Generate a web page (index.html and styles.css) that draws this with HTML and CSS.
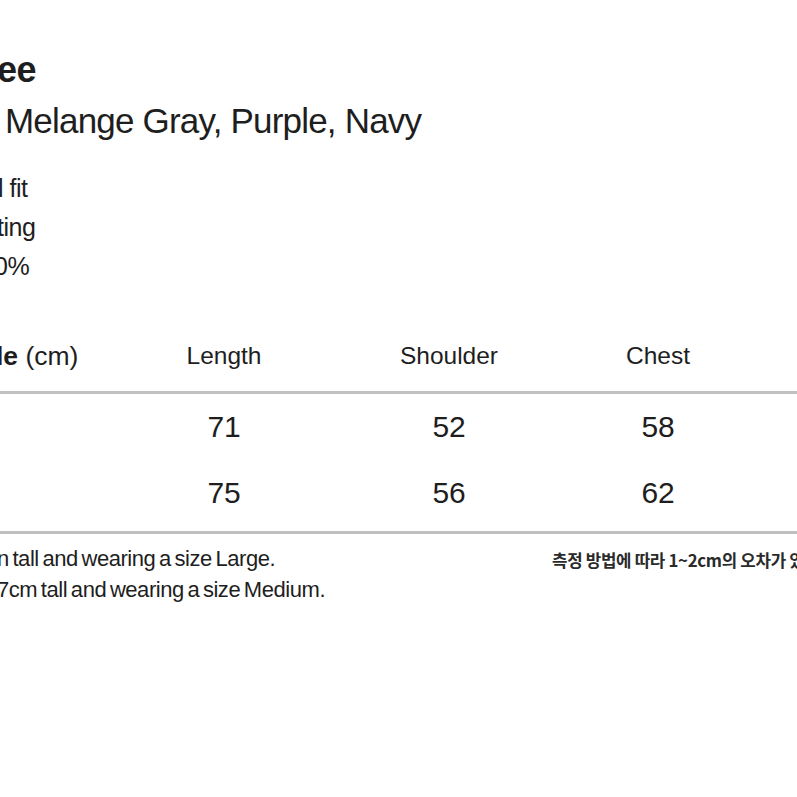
FILE: index.html
```html
<!DOCTYPE html>
<html lang="en">
<head>
<meta charset="utf-8">
<link rel="stylesheet" href="styles.css">
</head>
<body>
<div class="page">
  <section class="info">
    <h1 class="title">ee</h1>
    <p class="colors">Melange Gray, Purple, Navy</p>
    <ul class="specs">
      <li class="spec spec-fit">l fit</li>
      <li class="spec spec-ting">ting</li>
      <li class="spec spec-pct">0%</li>
    </ul>
  </section>

  <section class="size-table">
    <div class="row head">
      <div class="cell first"><b>le</b> (cm)</div>
      <div class="cell c1">Length</div>
      <div class="cell c2">Shoulder</div>
      <div class="cell c3">Chest</div>
      <div class="cell c4">Sleeve</div>
    </div>
    <div class="row body">
      <div class="cell first"></div>
      <div class="cell c1">71</div>
      <div class="cell c2">52</div>
      <div class="cell c3">58</div>
      <div class="cell c4"></div>
    </div>
    <div class="row body last">
      <div class="cell first"></div>
      <div class="cell c1">75</div>
      <div class="cell c2">56</div>
      <div class="cell c3">62</div>
      <div class="cell c4"></div>
    </div>
  </section>

  <section class="notes">
    <div class="notes-left">
      <p class="note">n tall and wearing a size Large.</p>
      <p class="note">7cm tall and wearing a size Medium.</p>
    </div>
    <p class="note-kr">측정 방법에 따라 1~2cm의 오차가 있을 수 있습니다.</p>
  </section>
</div>
</body>
</html>
```

FILE: styles.css
```css
html, body {
  margin: 0;
  padding: 0;
  background: #ffffff;
}
body {
  width: 797px;
  height: 797px;
  overflow: hidden;
  font-family: "Liberation Sans", Arial, sans-serif;
  color: #1e1e1e;
}
.page {
  display: flex;
  flex-direction: column;
}
.info {
  display: flex;
  flex-direction: column;
  padding-top: 50px;
}
.title {
  margin: 0 0 0 -3px;
  font-size: 36px;
  font-weight: 700;
  line-height: 40px;
  letter-spacing: -0.5px;
}
.colors {
  margin: 11px 0 0 5px;
  font-size: 35px;
  line-height: 40px;
  letter-spacing: -0.8px;
  white-space: nowrap;
}
.specs {
  list-style: none;
  margin: 28px 0 0 0;
  padding: 0;
  display: flex;
  flex-direction: column;
}
.spec {
  font-size: 25px;
  line-height: 39px;
  letter-spacing: -0.5px;
  white-space: nowrap;
}
.spec-fit { margin-left: -2px; }
.spec-ting { margin-left: -3px; }
.spec-pct { margin-left: -6px; }

.size-table {
  margin-top: 44px;
  display: flex;
  flex-direction: column;
}
.row {
  display: grid;
  grid-template-columns: 112px 224px 226px 192px 200px;
  align-items: center;
  width: 954px;
}
.head {
  height: 52px;
  padding-bottom: 9px;
  font-size: 24.5px;
  border-bottom: 3px solid #c0c0c0;
}
.body {
  height: 66px;
  font-size: 30px;
  letter-spacing: -0.3px;
}
.last {
  padding-bottom: 5px;
  border-bottom: 3px solid #c0c0c0;
}
.cell {
  text-align: center;
  white-space: nowrap;
}
.cell.first {
  text-align: left;
  margin-left: -4px;
  font-size: 26.5px;
}
.head .cell.first b { font-weight: 700; }

.notes {
  display: flex;
  align-items: flex-start;
  padding-top: 9px;
}
.notes-left {
  width: 552px;
  flex: none;
  display: flex;
  flex-direction: column;
  margin-left: -3px;
}
.note {
  margin: 0;
  font-size: 22px;
  line-height: 31px;
  letter-spacing: -0.45px;
  word-spacing: -2px;
  white-space: nowrap;
}
.note-kr {
  margin: 7px 0 0 3px;
  font-family: "Noto Sans CJK KR", sans-serif;
  font-weight: 700;
  font-size: 16.8px;
  line-height: 20px;
  letter-spacing: -0.3px;
  white-space: nowrap;
  color: #2a2a2a;
}
```
